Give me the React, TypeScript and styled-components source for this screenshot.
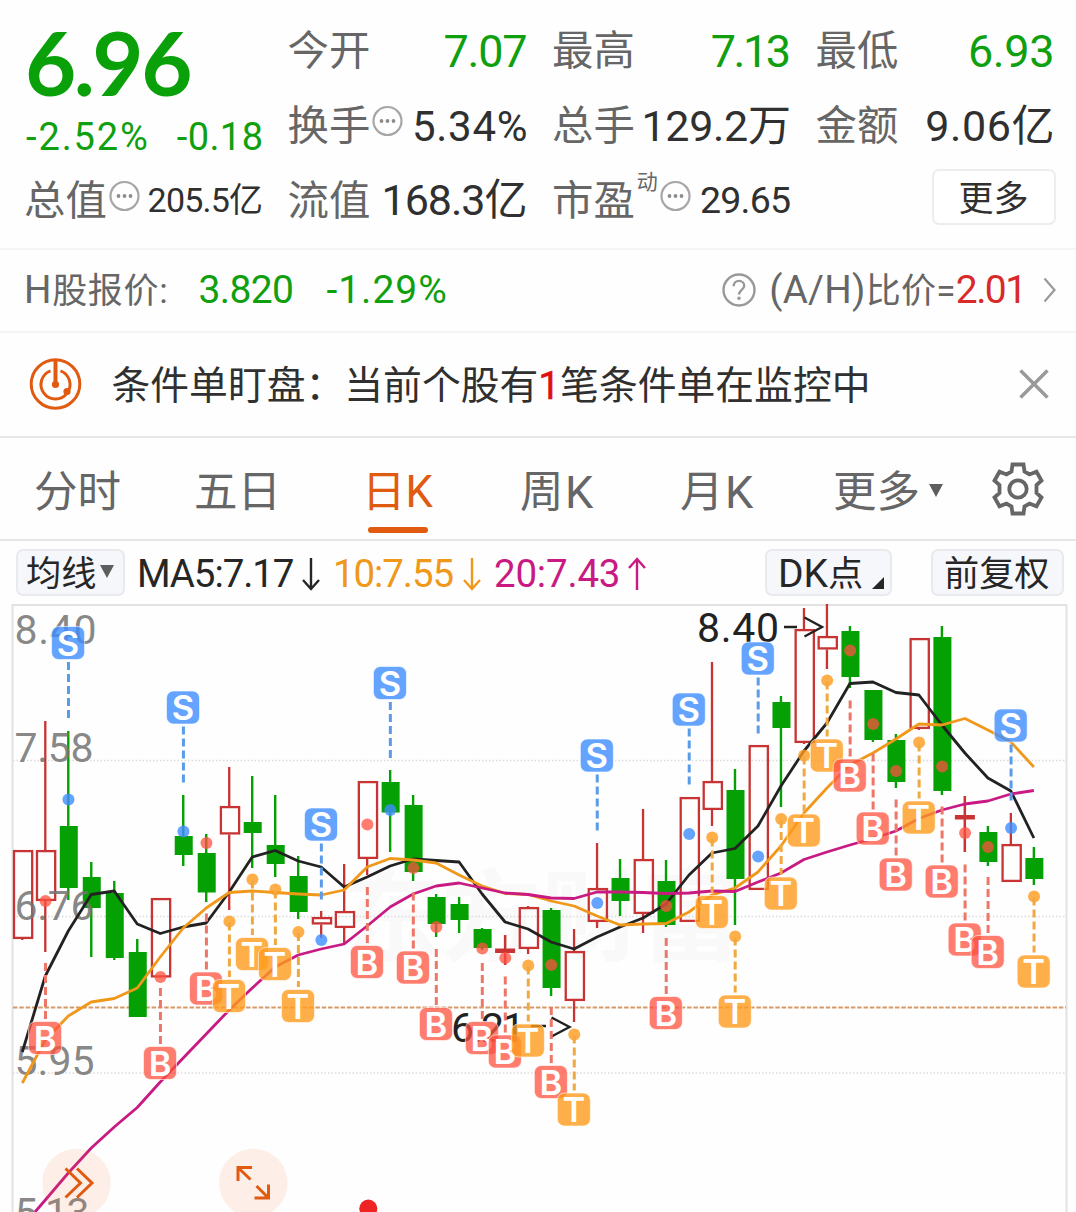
import React from "react";
import styled, { createGlobalStyle } from "styled-components";

const GREEN = "#0f9f0f";
const ORANGE = "#e05a10";
const GREY = "#666";
const INK = "#303030";
const FONT = `Roboto, "Noto Sans CJK SC", sans-serif`;

const Global = createGlobalStyle`
  * { box-sizing: border-box; }
  body { margin: 0; background: #fefefe; }
`;

const Page = styled.main`
  width: 1076px;
  height: 1212px;
  overflow: hidden;
  display: flex;
  flex-direction: column;
  background: #fefefe;
  font-family: ${FONT};
  color: ${INK};
  white-space: nowrap;
`;

/* ---------- quote header ---------- */

const Quote = styled.header`
  height: 248px;
  flex: none;
  display: grid;
  grid-template-columns: 238px 239px 238px 238px;
  column-gap: 25.5px;
  padding: 14px 0 0 25px;
`;

const QuoteColumn = styled.div`
  display: flex;
  flex-direction: column;
`;

const Cell = styled.div`
  height: 75px;
  display: flex;
  align-items: center;
  justify-content: space-between;
`;

const LabelGroup = styled.div`
  display: flex;
  align-items: center;
  gap: 2px;
`;

const Label = styled.span`
  margin-left: -1px;
  margin-top: -1px;
  font-size: 41.4px;
  line-height: 50px;
  color: ${GREY};
`;

const Value = styled.span<{ $size?: number; $color?: string; $spacing?: number; $lift?: number }>`
  font-size: ${(p) => p.$size ?? 45}px;
  letter-spacing: ${(p) => p.$spacing ?? 0}px;
  margin-right: ${(p) => -(p.$spacing ?? 0)}px;
  margin-bottom: ${(p) => (p.$lift ?? 0) * 2}px;
  line-height: 50px;
  color: ${(p) => p.$color ?? INK};
`;

const Price = styled.div`
  height: 100px;
  line-height: 96px;
  font-family: Lato, sans-serif;
  font-weight: 700;
  font-size: 88.5px;
  letter-spacing: -2.5px;
  color: #0aa00a;
`;

const Changes = styled.div`
  height: 46px;
  margin-bottom: 4px;
  padding-left: 1px;
  display: flex;
  align-items: center;
  justify-content: space-between;
`;

const Superscript = styled.sup`
  align-self: flex-start;
  margin-top: -7px;
  font-size: 21px;
  line-height: 24px;
  color: ${GREY};
`;

const MoreButton = styled.button`
  width: 124px;
  height: 56px;
  margin: -9px -1px 0 auto;
  padding: 5px 0 0;
  border: 2px solid #ededef;
  border-radius: 7px;
  background: #fff;
  font: 35px/45px ${FONT};
  color: ${INK};
`;

/* ---------- H share row ---------- */

const HShare = styled.section`
  height: 83px;
  flex: none;
  display: flex;
  align-items: center;
  border-top: 2px solid #f4f4f4;
  padding: 0 19px 2px 24px;
  font-size: 35px;
  color: ${GREY};
`;

const HName = styled.span`
  margin-top: -4px;
  letter-spacing: 0.7px;
`;

const HQuote = styled.span<{ $gap: number; $spacing: number }>`
  margin-left: ${(p) => p.$gap}px;
  font-size: 39px;
  letter-spacing: ${(p) => p.$spacing}px;
  color: ${GREEN};
`;

const Ratio = styled.div`
  margin-left: auto;
  display: flex;
  align-items: center;
`;

const RatioLabel = styled.span`
  margin: -4px 0 0 13px;
  letter-spacing: 0.3px;
`;

const LatinText = styled.span`
  font-size: 38.5px;
`;

const RatioValue = styled.span`
  font-size: 39px;
  letter-spacing: -1.6px;
  color: #d92a2a;
  margin-right: 17.5px;
`;

/* ---------- alert row ---------- */

const Alert = styled.section`
  height: 105px;
  flex: none;
  display: flex;
  align-items: center;
  border-top: 2px solid #f4f4f4;
  padding: 0 26px 1px 29px;
`;

const AlertText = styled.p`
  margin: 3px auto 0 29.5px;
  font-size: 38.8px;
  line-height: 50px;
`;

const AlertCount = styled.span`
  color: #e01010;
  -webkit-text-stroke: 0.5px #e01010;
`;

/* ---------- period tabs ---------- */

const Tabs = styled.nav`
  height: 105px;
  flex: none;
  position: relative;
  display: flex;
  align-items: center;
  border-top: 2px solid #e6e6e6;
  border-bottom: 2px solid #e6e6e6;
  padding: 0 30px 0 34px;
`;

const Tab = styled.button<{ $width: number; $active?: boolean }>`
  width: ${(p) => p.$width}px;
  height: 101px;
  padding: 8px 0 0;
  border: 0;
  background: none;
  display: flex;
  flex-direction: column;
  align-items: flex-start;
  justify-content: center;
  font: 43.5px/52px ${FONT};
  color: ${(p) => (p.$active ? ORANGE : GREY)};
`;

const TabText = styled.span`
  display: flex;
  align-items: center;
`;

const TabLatin = styled.span`
  margin-left: 1.5px;
  font-size: 45px;
`;

const Underline = styled.i`
  position: absolute;
  left: 368px;
  bottom: 6px;
  width: 60px;
  height: 6px;
  border-radius: 3px;
  background: ${ORANGE};
`;

const Triangle = styled.i<{ $gap: number }>`
  margin: -5px 0 0 ${(p) => p.$gap}px;
  border: 7.5px solid transparent;
  border-top: 13px solid #5e5e5e;
  border-bottom: 0;
`;

/* ---------- indicator bar ---------- */

const Indicators = styled.section`
  height: 63px;
  flex: none;
  display: flex;
  align-items: center;
  padding: 0 12px 0 16px;
`;

const Chip = styled.button<{ $width: number; $inset?: number }>`
  width: ${(p) => p.$width}px;
  height: 47px;
  padding: 3px 0 0 ${(p) => p.$inset ?? 9}px;
  display: flex;
  align-items: center;
  border: 2px solid #e8eaee;
  border-radius: 7px;
  background: #f6f7fa;
  font: 35.2px/40px ${FONT};
  color: #262626;
`;

const ChipLatin = styled.span`
  font-size: 39px;
`;

const Corner = styled.i`
  align-self: flex-end;
  margin: 0 0 5px 9px;
  border-left: 12px solid transparent;
  border-bottom: 12px solid #262626;
`;

const Average = styled.div<{ $color: string; $width: number; $spacing: number }>`
  display: flex;
  align-items: center;
  justify-content: space-between;
  width: ${(p) => p.$width}px;
  margin-left: 12px;
  margin-top: 2px;
  font-size: 38.5px;
  line-height: 42px;
  letter-spacing: ${(p) => p.$spacing}px;
  color: ${(p) => p.$color};
`;

const ChipGroup = styled.div`
  margin-left: auto;
  display: flex;
  gap: 39px;
`;

const ChartSvg = styled.svg`
  display: block;
  flex: none;
`;

/* ---------- icons ---------- */

const RaisedIcon = styled.svg`
  margin-bottom: 11px;
`;

const InfoIcon = () => (
  <RaisedIcon width="32" height="32" viewBox="0 0 32 32">
    <circle cx="15.5" cy="16" r="14" fill="none" stroke="#a6a6a6" strokeWidth="2.2" />
    {[9.5, 15.5, 21.5].map((x) => (
      <circle key={x} cx={x} cy="16" r="1.9" fill="#8c8c8c" />
    ))}
  </RaisedIcon>
);

const HelpIcon = () => (
  <svg width="34" height="36" viewBox="0 0 34 36" fill="none" stroke="#999" strokeWidth="2.4">
    <circle cx="17" cy="18" r="15.5" />
    <path d="M11.7 14.2c0-3.3 2.3-5.3 5.3-5.3s5.2 2 5.2 4.9c0 3.9-5.2 4.2-5.2 8.6" />
    <circle cx="17" cy="26.3" r="1.7" fill="#999" stroke="none" />
  </svg>
);

const ChevronIcon = () => (
  <svg width="14" height="26" viewBox="0 0 14 26" fill="none" stroke="#999" strokeWidth="2.2">
    <path d="M1.5 1.5L11.5 13L1.5 24.5" />
  </svg>
);

const RadarIcon = () => (
  <svg width="53" height="54" viewBox="0 0 53 54" fill="none" stroke={ORANGE}>
    <circle cx="26.5" cy="27" r="24.3" strokeWidth="3" />
    <path d="M21.5 13.8A14.5 14.5 0 1 0 31.5 13.8" strokeWidth="3" />
    <path d="M26.5 2v25" strokeWidth="4" />
    <circle cx="26.5" cy="27.5" r="3.6" fill={ORANGE} stroke="none" />
    <circle cx="38" cy="34.5" r="3.6" fill={ORANGE} stroke="none" />
  </svg>
);

const CloseIcon = () => (
  <svg width="32" height="32" viewBox="0 0 32 32" stroke="#999" strokeWidth="3.4">
    <path d="M2.5 2.5L29.5 29.5M29.5 2.5L2.5 29.5" />
  </svg>
);

const GearIcon = () => (
  <svg width="56" height="56" viewBox="0 0 56 56" fill="none" stroke={GREY} strokeWidth="3.8">
    <path d="M22.5 3.5H33.5L34.5 10.5L39.5 13.5L46.5 10.7L51.5 19.5L46.5 24V32L51.5 36.5L46.5 45.3L39.5 42.5L34.5 45.5L33.5 52.5H22.5L21.5 45.5L16.5 42.5L9.5 45.3L4.5 36.5L9.5 32V24L4.5 19.5L9.5 10.7L16.5 13.5L21.5 10.5Z" />
    <circle cx="28" cy="28" r="8.7" />
  </svg>
);

const TrendArrow = ({ up }: { up?: boolean }) => (
  <svg width="20" height="34" viewBox="0 0 20 34" fill="none" stroke="currentColor" strokeWidth="2.4">
    <path d={up ? "M10 33V2M2 11L10 2L18 11" : "M10 1V32M2 23L10 32L18 23"} />
  </svg>
);

/* ---------- chart ---------- */

const STEP = 22.99;
const cx = (i: number) => 22.3 + STEP * i;

type Candle = ["u" | "d", number, number, number, number];

// direction, high, body top, body bottom, low
const candles: Candle[] = [
  ["u", 850, 850, 939, 940], ["u", 721, 850, 901, 952], ["d", 731, 826, 888, 900],
  ["d", 862, 877, 908, 957], ["d", 881, 893, 958, 960], ["d", 939, 952, 1017, 1017],
  ["u", 898, 898, 977.5, 978], ["d", 795, 836, 855, 866], ["d", 834, 853, 892.5, 902],
  ["u", 767, 806, 834.5, 910], ["d", 776, 822, 833, 868], ["d", 795, 845, 864, 877],
  ["d", 856, 876, 912, 919], ["u", 911, 917, 924.5, 938], ["u", 864, 911, 928, 943],
  ["u", 781, 781, 859, 875], ["d", 770, 782, 812.5, 852], ["d", 795, 805, 872, 881],
  ["d", 894, 897, 924, 937], ["d", 897, 904, 920, 933], ["d", 928, 929, 948, 950],
  ["u", 935, 948.5, 953, 965], ["u", 906, 907, 949, 954], ["d", 908, 910, 988, 996],
  ["u", 929, 951, 1001, 1022], ["u", 843, 888, 922, 928], ["d", 859, 878, 901, 916],
  ["u", 809, 859, 914, 933], ["d", 860, 881, 925, 927], ["u", 797, 797, 922, 922],
  ["u", 662, 781, 810, 826], ["d", 769, 790, 879, 925], ["u", 745, 745, 890, 890],
  ["d", 696, 702, 728, 807], ["u", 608, 629, 743, 744], ["u", 604, 636, 649.5, 669],
  ["d", 626, 631, 677, 688], ["d", 690, 690, 740, 742], ["d", 734, 740, 782, 788],
  ["u", 638, 638, 729, 730], ["d", 626, 637, 791, 795], ["u", 796, 815, 819.5, 852],
  ["d", 826, 832, 862, 866], ["u", 813, 844, 882, 882], ["d", 847, 858, 879, 885],
];

const ma5 = [1052, 976, 931, 894.5, 891, 924, 933.5, 927, 923, 892, 857, 850.5, 861, 867, 887, 877, 866, 859, 860.5, 862, 894, 922, 929, 942, 949, 937, 927, 918, 904, 875, 853, 848.5, 826, 786, 751, 723, 683.5, 682, 692.5, 695, 725, 753, 778, 791, 838];
const ma10 = [1083, 1040, 1016, 1002, 998.5, 988, 957, 928, 908, 892.5, 891, 892.5, 894, 895, 890, 867, 858.5, 860, 863, 875, 886, 893.5, 894.5, 901, 906, 916, 925, 924, 923.5, 912, 895, 888, 872, 846, 813, 788, 765, 753, 739, 724, 725, 718.5, 730, 742, 767];
const ma20 = [1200, 1173, 1148, 1127, 1107.5, 1082, 1058, 1034, 1010, 988, 967, 955, 949, 944, 926, 907, 894, 886, 883, 888, 893, 894.5, 898, 898.5, 892, 892, 892.5, 893.5, 893, 891, 891.5, 882, 873, 859.5, 852, 845, 838.5, 831, 818.5, 810, 804, 801, 794, 790.5];

const toPoints = (ys: number[], from = 0) => ys.map((y, k) => `${cx(k + from)},${y}`).join(" ");

type Kind = "S" | "B" | "T";
const kindColor: Record<Kind, string> = {
  S: "rgba(61,141,255,.8)",
  B: "rgba(254,82,63,.75)",
  T: "rgba(255,155,28,.8)",
};
const dashColor: Record<Kind, string> = { S: "#5b9be8", B: "#ee7668", T: "#f0a840" };

// kind, candle index, badge centre, dot centre
const signals: [Kind, number, number, number][] = [
  ["B", 1, 1038, 901], ["S", 2, 643, 799.5], ["B", 6, 1063, 977], ["S", 7, 707.5, 831.5],
  ["B", 8, 988.5, 843], ["T", 9, 996, 921.5], ["T", 10, 954, 879.5], ["T", 11, 964, 889.5],
  ["T", 12, 1006, 932], ["S", 13, 824.5, 940], ["B", 15, 962, 824.5], ["S", 16, 683, 810],
  ["B", 17, 967.5, 868], ["B", 18, 1024, 927], ["B", 20, 1038, 948.5], ["B", 21, 1051.5, 958],
  ["T", 22, 1040.5, 965.5], ["B", 23, 1082, 965], ["T", 24, 1109.5, 1034.5], ["S", 25, 755.5, 903],
  ["B", 28, 1013, 906], ["S", 29, 709.5, 834], ["T", 30, 912, 837.5], ["T", 31, 1011.5, 936.5],
  ["S", 32, 658.5, 856.5], ["T", 33, 893.5, 819], ["T", 34, 830.5, 755.5], ["T", 35, 755.5, 680.5],
  ["B", 36, 775.5, 650.5], ["B", 37, 828.5, 724], ["B", 38, 874.5, 771], ["T", 39, 817.5, 742.5],
  ["B", 40, 881.5, 766.5], ["B", 41, 939.5, 833], ["B", 42, 952, 847], ["S", 43, 725.5, 828],
  ["T", 44, 971.5, 896.5],
];

const axis: [string, number, number][] = [
  ["8.40", 644, 81], ["7.58", 762, 78], ["6.76", 919.5, 78], ["5.95", 1075, 79], ["5.13", 1227, 74],
];

const CandleMark = ({ i, c }: { i: number; c: Candle }) => {
  const [dir, high, top, bottom, low] = c;
  const x = cx(i);
  if (dir === "d") {
    return (
      <g fill="#04a004">
        <rect x={x - 1.2} y={high} width="2.4" height={low - high} />
        <rect x={x - 8.5} y={top} width="18" height={bottom - top} />
      </g>
    );
  }
  return (
    <g stroke="#c83434" strokeWidth="2.3" fill="none">
      <path d={`M${x} ${high}V${top}M${x} ${bottom}V${low}`} />
      {bottom - top < 6 ? (
        <rect x={x - 10} y={top} width="20" height={bottom - top} fill="#c83434" stroke="none" />
      ) : (
        <rect x={x - 8.3} y={top + 1.1} width="18.2" height={bottom - top - 2.2} />
      )}
      {bottom - top < 6 && <path d={`M${x} ${high}V${low}`} />}
    </g>
  );
};

const SignalMark = ({ kind, i, y, dot }: { kind: Kind; i: number; y: number; dot: number }) => {
  const x = cx(i);
  const line = kind === "S" ? [y + 19, y + 75] : kind === "B" ? [y - 75, y - 19] : [dot + 1, y - 19];
  return (
    <g>
      <circle cx={x + 0.2} cy={dot} r="6" fill={kindColor[kind]} />
      <path d={`M${x + 0.2} ${line[0]}V${line[1]}`} stroke={dashColor[kind]} strokeWidth="3" strokeDasharray="8 4" />
      <rect x={x - 16.7} y={y - 16.5} width="33" height="33" rx="7" fill={kindColor[kind]} stroke="rgba(255,255,255,.6)" strokeWidth="1" />
      <text x={x - 0.2} y={y + 12.5} fontFamily="Inter" fontWeight="600" fontSize="34.5" textAnchor="middle" fill="#fff">
        {kind}
      </text>
    </g>
  );
};

const Chart = () => (
  <ChartSvg width="1076" height="608" viewBox="0 604 1076 608">
    <text x="341" y="953" fontFamily="Noto Sans CJK SC" fontWeight="700" fontSize="100" fill="#f9f9f9">
      东方财富
    </text>
    <path d="M12.5 1212V605H1066.5V1212" fill="none" stroke="#e2e2e2" strokeWidth="2" />
    {[760.5, 916.5, 1073].map((y) => (
      <path key={y} d={`M13 ${y}H1066`} stroke="#dcdcdc" strokeWidth="1.5" strokeDasharray="1.5 2" />
    ))}
    <path d="M13 1007.5H1066" stroke="#d69a68" strokeWidth="1.9" strokeDasharray="4.5 1.8" />
    {candles.map((c, i) => (
      <CandleMark key={i} i={i} c={c} />
    ))}
    <g fontFamily="Roboto" fontSize="41" fill="rgba(115,115,115,.85)">
      {axis.map(([label, y, w]) => (
        <text key={label} x="14.5" y={y} textLength={w + 1}>
          {label}
        </text>
      ))}
    </g>
    <g fontFamily="Roboto" fontSize="41" fill="#222">
      <text x="697" y="642" textLength="82">8.40</text>
      <text x="451" y="1041.5" textLength="74">6.21</text>
    </g>
    <path d="M784 627H797M804.5 617.5L822 627L804.5 636.5M531 1026H546M551.5 1017.5L569.5 1027L551.5 1036.5" fill="none" stroke="#222" strokeWidth="2.4" />
    <g fill="none" strokeWidth="2.8" strokeLinejoin="round">
      <polyline points={toPoints(ma5)} stroke="#222" />
      <polyline points={toPoints(ma10)} stroke="#f0981a" />
      <polyline points={`35,1212 ${toPoints(ma20, 1)}`} stroke="#c81a82" />
    </g>
    {signals.map(([kind, i, y, dot]) => (
      <SignalMark key={i} kind={kind} i={i} y={y} dot={dot} />
    ))}
    <circle cx="76.5" cy="1183" r="34.3" fill="rgba(250,110,40,.1)" />
    <circle cx="253.3" cy="1183" r="34.3" fill="rgba(250,110,40,.1)" />
    <g fill="none" stroke={ORANGE} strokeWidth="3">
      <path d="M65.5 1168.5L80.5 1183L65.5 1197.5M77 1168.5L92 1183L77 1197.5" />
      <path d="M238 1181V1167.5H252M238.5 1168L250.5 1179.5M268.5 1184.5V1198H254.5M268 1197.5L256.5 1186" />
    </g>
    <circle cx="368.3" cy="1208.5" r="9" fill="#ee2424" />
  </ChartSvg>
);

export default function App() {
  return (
    <Page>
      <Global />
      <Quote>
        <QuoteColumn>
          <Price>6.96</Price>
          <Changes>
            <Value $size={38} $spacing={1.9} $color={GREEN}>-2.52%</Value>
            <Value $size={38} $spacing={0.4} $color={GREEN}>-0.18</Value>
          </Changes>
          <Cell>
            <LabelGroup><Label>总值</Label><InfoIcon /></LabelGroup>
            <Value $size={34} $spacing={-0.8} $lift={2}>205.5亿</Value>
          </Cell>
        </QuoteColumn>
        <QuoteColumn>
          <Cell><Label>今开</Label><Value $spacing={-1.2} $color={GREEN}>7.07</Value></Cell>
          <Cell>
            <LabelGroup><Label>换手</Label><InfoIcon /></LabelGroup>
            <Value $size={42} $spacing={0.7}>5.34%</Value>
          </Cell>
          <Cell><Label>流值</Label><Value $size={43} $spacing={-1} $lift={1.5}>168.3亿</Value></Cell>
        </QuoteColumn>
        <QuoteColumn>
          <Cell><Label>最高</Label><Value $spacing={-2.5} $color={GREEN}>7.13</Value></Cell>
          <Cell><Label>总手</Label><Value $size={43} $spacing={-0.3} $lift={1}>129.2万</Value></Cell>
          <Cell>
            <LabelGroup>
              <Label>市盈</Label>
              <Superscript>动</Superscript>
              <InfoIcon />
            </LabelGroup>
            <Value $size={37.5} $spacing={-0.8} $lift={1.5}>29.65</Value>
          </Cell>
        </QuoteColumn>
        <QuoteColumn>
          <Cell><Label>最低</Label><Value $spacing={-0.4} $color={GREEN}>6.93</Value></Cell>
          <Cell><Label>金额</Label><Value $size={43} $spacing={0.6} $lift={1}>9.06亿</Value></Cell>
          <Cell><MoreButton>更多</MoreButton></Cell>
        </QuoteColumn>
      </Quote>

      <HShare>
        <HName><LatinText>H</LatinText>股报价:</HName>
        <HQuote $gap={30} $spacing={-0.6}>3.820</HQuote>
        <HQuote $gap={33} $spacing={1}>-1.29%</HQuote>
        <Ratio>
          <HelpIcon />
          <RatioLabel><LatinText>(A/H)</LatinText>比价=</RatioLabel>
          <RatioValue>2.01</RatioValue>
          <ChevronIcon />
        </Ratio>
      </HShare>

      <Alert>
        <RadarIcon />
        <AlertText>
          条件单盯盘：当前个股有<AlertCount>1</AlertCount>笔条件单在监控中
        </AlertText>
        <CloseIcon />
      </Alert>

      <Tabs>
        <Tab $width={160}>分时</Tab>
        <Tab $width={168}>五日</Tab>
        <Tab $width={158} $active>日K</Tab>
        <Tab $width={160}><TabText>周<TabLatin>K</TabLatin></TabText></Tab>
        <Tab $width={153}><TabText>月<TabLatin>K</TabLatin></TabText></Tab>
        <Tab $width={157}><TabText>更多<Triangle $gap={9} /></TabText></Tab>
        <GearIcon />
        <Underline />
      </Tabs>

      <Indicators>
        <Chip $width={109} $inset={8}>均线<Triangle $gap={4} /></Chip>
        <Average $color="#262626" $width={184} $spacing={-1.1}>MA5:7.17<TrendArrow /></Average>
        <Average $color="#f0981a" $width={149} $spacing={-1.1}>10:7.55<TrendArrow /></Average>
        <Average $color="#c81a82" $width={153} $spacing={-0.2}>20:7.43<TrendArrow up /></Average>
        <ChipGroup>
          <Chip $width={127} $inset={11}><ChipLatin>DK</ChipLatin>点<Corner /></Chip>
          <Chip $width={133} $inset={11}>前复权</Chip>
        </ChipGroup>
      </Indicators>

      <Chart />
    </Page>
  );
}
